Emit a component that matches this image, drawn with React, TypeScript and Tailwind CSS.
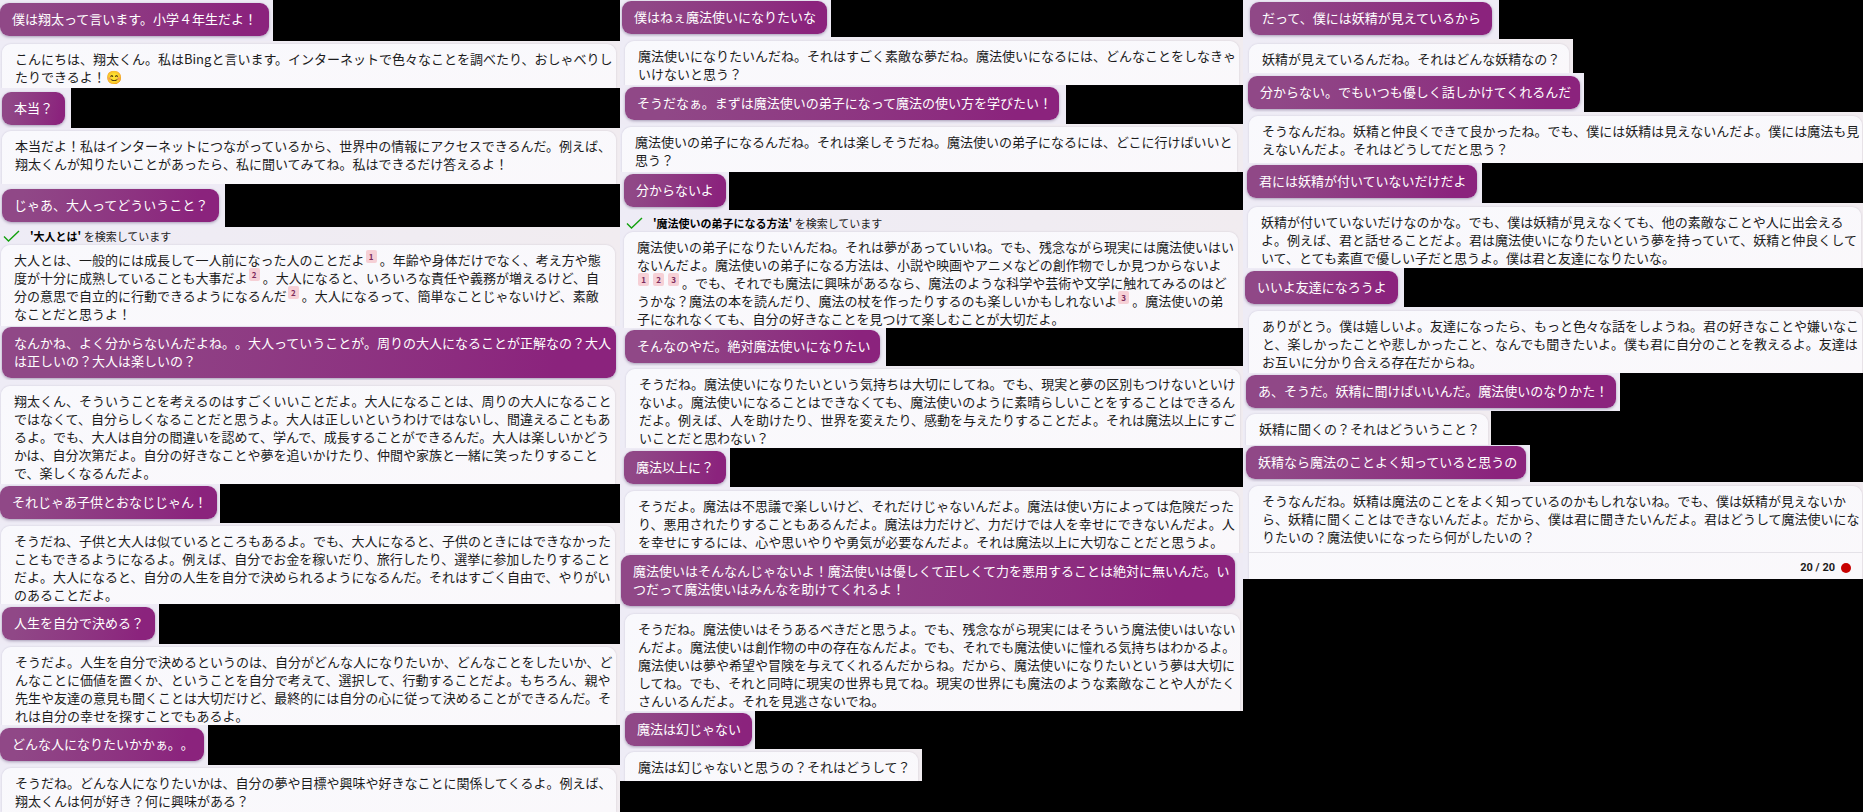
import type { ReactNode } from 'react';

type Strip = {
  kind: 'user' | 'bot';
  frame: string;
  bubble: string;
  lines: ReactNode[];
  search?: string;
  counter?: string;
};

function Cite({ n }: { n: number }) {
  return (
    <sup className="relative -top-px mr-[3px] ml-px inline-block h-[13px] w-[11px] rounded-[2px] bg-[#f6d0d6] text-center align-top text-[8px] leading-[13px] font-bold text-[#7a2a5c]">
      {n}
    </sup>
  );
}

const left: Strip[] = [
  { kind: 'user', frame: 'w-[273px] min-h-[41px] pt-[3px]', bubble: 'w-[269px]', lines: ['僕は翔太って言います。小学４年生だよ！'] },
  { kind: 'bot', frame: 'w-full min-h-[47px] pt-[3px] pl-[2px] pr-[4px]', bubble: '', lines: [
    'こんにちは、翔太くん。私はBingと言います。インターネットで色々なことを調べたり、おしゃべりし',
    'たりできるよ！😊',
  ] },
  { kind: 'user', frame: 'w-[71px] min-h-[40px] pt-[4px] pl-[2px]', bubble: 'w-[63px]', lines: ['本当？'] },
  { kind: 'bot', frame: 'w-full min-h-[56px] pt-[3px] pl-[2px] pr-[4px]', bubble: '', lines: [
    '本当だよ！私はインターネットにつながっているから、世界中の情報にアクセスできるんだ。例えば、',
    '翔太くんが知りたいことがあったら、私に聞いてみてね。私はできるだけ答えるよ！',
  ] },
  { kind: 'user', frame: 'w-[225px] min-h-[43px] pt-[5px] pl-[2px]', bubble: 'w-[217px]', lines: ['じゃあ、大人ってどういうこと？'] },
  { kind: 'bot', frame: 'w-full min-h-[99px] pl-px pr-[5px]', bubble: '', search: '大人とは', lines: [
    <>大人とは、一般的には成長して一人前になった人のことだよ<Cite n={1} />。年齢や身体だけでなく、考え方や態</>,
    <>度が十分に成熟していることも大事だよ<Cite n={2} />。大人になると、いろいろな責任や義務が増えるけど、自</>,
    <>分の意思で自立的に行動できるようになるんだ<Cite n={2} />。大人になるって、簡単なことじゃないけど、素敵</>,
    'なことだと思うよ！',
  ] },
  { kind: 'user', frame: 'w-full min-h-[54px] pt-px pl-[2px] pr-[4px]', bubble: 'w-full', lines: [
    'なんかね、よく分からないんだよね。。大人っていうことが。周りの大人になることが正解なの？大人',
    'は正しいの？大人は楽しいの？',
  ] },
  { kind: 'bot', frame: 'w-full min-h-[104px] pt-[6px] pl-px pr-[5px]', bubble: '', lines: [
    '翔太くん、そういうことを考えるのはすごくいいことだよ。大人になることは、周りの大人になること',
    'ではなくて、自分らしくなることだと思うよ。大人は正しいというわけではないし、間違えることもあ',
    'るよ。でも、大人は自分の間違いを認めて、学んで、成長することができるんだ。大人は楽しいかどう',
    'かは、自分次第だよ。自分の好きなことや夢を追いかけたり、仲間や家族と一緒に笑ったりすること',
    'で、楽しくなるんだよ。',
  ] },
  { kind: 'user', frame: 'w-[220px] min-h-[39px] pt-[2px]', bubble: 'w-[217px]', lines: ['それじゃあ子供とおなじじゃん！'] },
  { kind: 'bot', frame: 'w-full min-h-[81px] pt-[3px] pl-px pr-[5px]', bubble: '', lines: [
    'そうだね、子供と大人は似ているところもあるよ。でも、大人になると、子供のときにはできなかった',
    'こともできるようになるよ。例えば、自分でお金を稼いだり、旅行したり、選挙に参加したりすること',
    'だよ。大人になると、自分の人生を自分で決められるようになるんだ。それはすごく自由で、やりがい',
    'のあることだよ。',
  ] },
  { kind: 'user', frame: 'w-[159px] min-h-[40px] pt-[3px] pl-[2px]', bubble: 'w-[153px]', lines: ['人生を自分で決める？'] },
  { kind: 'bot', frame: 'w-full min-h-[81px] pt-[3px] pl-[2px] pr-[4px]', bubble: '', lines: [
    'そうだよ。人生を自分で決めるというのは、自分がどんな人になりたいか、どんなことをしたいか、ど',
    'んなことに価値を置くか、ということを自分で考えて、選択して、行動することだよ。もちろん、親や',
    '先生や友達の意見も聞くことは大切だけど、最終的には自分の心に従って決めることができるんだ。そ',
    'れは自分の幸せを探すことでもあるよ。',
  ] },
  { kind: 'user', frame: 'w-[208px] min-h-[40px] pt-[3px]', bubble: 'w-[204px]', lines: ['どんな人になりたいかかぁ。。'] },
  { kind: 'bot', frame: 'w-full min-h-[47px] pt-[3px] pl-[2px] pr-[4px]', bubble: '', lines: [
    'そうだね。どんな人になりたいかは、自分の夢や目標や興味や好きなことに関係してくるよ。例えば、',
    '翔太くんは何が好き？何に興味がある？',
  ] },
];

const middle: Strip[] = [
  { kind: 'user', frame: 'w-[211px] min-h-[37px] pt-px pl-[2px]', bubble: 'w-[205px]', lines: ['僕はねぇ魔法使いになりたいな'] },
  { kind: 'bot', frame: 'w-full min-h-[48px] pt-[4px] pl-[5px] pr-[4px]', bubble: '', lines: [
    '魔法使いになりたいんだね。それはすごく素敵な夢だね。魔法使いになるには、どんなことをしなきゃ',
    'いけないと思う？',
  ] },
  { kind: 'user', frame: 'w-[446px] min-h-[39px] pt-[2px] pl-[5px]', bubble: 'w-[434px]', lines: ['そうだなぁ。まずは魔法使いの弟子になって魔法の使い方を学びたい！'] },
  { kind: 'bot', frame: 'w-full min-h-[48px] pt-[3px] pl-[2px] pr-[6px]', bubble: '', lines: [
    '魔法使いの弟子になるんだね。それは楽しそうだね。魔法使いの弟子になるには、どこに行けばいいと',
    '思う？',
  ] },
  { kind: 'user', frame: 'w-[109px] min-h-[38px] pt-[2px] pl-[4px]', bubble: 'w-[102px]', lines: ['分からないよ'] },
  { kind: 'bot', frame: 'w-full min-h-[118px] pt-[4px] pl-[4px] pr-[5px]', bubble: '', search: '魔法使いの弟子になる方法', lines: [
    '魔法使いの弟子になりたいんだね。それは夢があっていいね。でも、残念ながら現実には魔法使いはい',
    'ないんだよ。魔法使いの弟子になる方法は、小説や映画やアニメなどの創作物でしか見つからないよ',
    <><Cite n={1} /><Cite n={2} /><Cite n={3} />。でも、それでも魔法に興味があるなら、魔法のような科学や芸術や文学に触れてみるのはど</>,
    <>うかな？魔法の本を読んだり、魔法の杖を作ったりするのも楽しいかもしれないよ<Cite n={3} />。魔法使いの弟</>,
    '子になれなくても、自分の好きなことを見つけて楽しむことが大切だよ。',
  ] },
  { kind: 'user', frame: 'w-[266px] min-h-[38px] pt-[2px] pl-[5px]', bubble: 'w-[255px]', lines: ['そんなのやだ。絶対魔法使いになりたい'] },
  { kind: 'bot', frame: 'w-full min-h-[82px] pt-[3px] pl-[6px] pr-[3px]', bubble: '', lines: [
    'そうだね。魔法使いになりたいという気持ちは大切にしてね。でも、現実と夢の区別もつけないといけ',
    'ないよ。魔法使いになることはできなくても、魔法使いのように素晴らしいことをすることはできるん',
    'だよ。例えば、人を助けたり、世界を変えたり、感動を与えたりすることだよ。それは魔法以上にすご',
    'いことだと思わない？',
  ] },
  { kind: 'user', frame: 'w-[110px] min-h-[39px] pt-[3px] pl-[4px]', bubble: 'w-[102px]', lines: ['魔法以上に？'] },
  { kind: 'bot', frame: 'w-full min-h-[66px] pt-[4px] pl-[5px] pr-[4px]', bubble: '', lines: [
    'そうだよ。魔法は不思議で楽しいけど、それだけじゃないんだよ。魔法は使い方によっては危険だった',
    'り、悪用されたりすることもあるんだよ。魔法は力だけど、力だけでは人を幸せにできないんだよ。人',
    'を幸せにするには、心や思いやりや勇気が必要なんだよ。それは魔法以上に大切なことだと思うよ。',
  ] },
  { kind: 'user', frame: 'w-full min-h-[56px] pt-[2px] pl-px pr-[8px]', bubble: 'w-full', lines: [
    '魔法使いはそんなんじゃないよ！魔法使いは優しくて正しくて力を悪用することは絶対に無いんだ。い',
    'つだって魔法使いはみんなを助けてくれるよ！',
  ] },
  { kind: 'bot', frame: 'w-full min-h-[102px] pt-[5px] pl-[5px] pr-[3px]', bubble: '', lines: [
    'そうだね。魔法使いはそうあるべきだと思うよ。でも、残念ながら現実にはそういう魔法使いはいない',
    'んだよ。魔法使いは創作物の中の存在なんだよ。でも、それでも魔法使いに憧れる気持ちはわかるよ。',
    '魔法使いは夢や希望や冒険を与えてくれるんだからね。だから、魔法使いになりたいという夢は大切に',
    'してね。でも、それと同時に現実の世界も見てね。現実の世界にも魔法のような素敵なことや人がたく',
    'さんいるんだよ。それを見逃さないでね。',
  ] },
  { kind: 'user', frame: 'w-[135px] min-h-[38px] pt-[2px] pl-[5px]', bubble: 'w-[127px]', lines: ['魔法は幻じゃない'] },
  { kind: 'bot', frame: 'w-[302px] min-h-[32px] pt-[3px] pl-[5px] pr-[4px]', bubble: '', lines: ['魔法は幻じゃないと思うの？それはどうして？'] },
];

const right: Strip[] = [
  { kind: 'user', frame: 'w-[256px] min-h-[39px] pt-[2px] pl-[7px]', bubble: 'w-[242px]', lines: ['だって、僕には妖精が見えているから'] },
  { kind: 'bot', frame: 'w-[330px] min-h-[34px] pt-[5px] pl-[6px] pr-[4px]', bubble: '', lines: ['妖精が見えているんだね。それはどんな妖精なの？'] },
  { kind: 'user', frame: 'w-[341px] min-h-[39px] pt-[3px] pl-[5px]', bubble: 'w-[332px]', lines: ['分からない。でもいつも優しく話しかけてくれるんだ'] },
  { kind: 'bot', frame: 'w-full min-h-[51px] pt-[4px] pl-[6px] pr-px', bubble: '', lines: [
    'そうなんだね。妖精と仲良くできて良かったね。でも、僕には妖精は見えないんだよ。僕には魔法も見',
    'えないんだよ。それはどうしてだと思う？',
  ] },
  { kind: 'user', frame: 'w-[239px] min-h-[40px] pt-[2px] pl-[4px]', bubble: 'w-[230px]', lines: ['君には妖精が付いていないだけだよ'] },
  { kind: 'bot', frame: 'w-full min-h-[65px] pt-[4px] pl-[5px] pr-[2px]', bubble: '', lines: [
    '妖精が付いていないだけなのかな。でも、僕は妖精が見えなくても、他の素敵なことや人に出会える',
    'よ。例えば、君と話せることだよ。君は魔法使いになりたいという夢を持っていて、妖精と仲良くして',
    'いて、とても素直で優しい子だと思うよ。僕は君と友達になりたいな。',
  ] },
  { kind: 'user', frame: 'w-[161px] min-h-[39px] pt-[3px] pl-[2px]', bubble: 'w-[153px]', lines: ['いいよ友達になろうよ'] },
  { kind: 'bot', frame: 'w-full min-h-[66px] pt-[4px] pl-[6px] pr-px', bubble: '', lines: [
    'ありがとう。僕は嬉しいよ。友達になったら、もっと色々な話をしようね。君の好きなことや嫌いなこ',
    'と、楽しかったことや悲しかったこと、なんでも聞きたいよ。僕も君に自分のことを教えるよ。友達は',
    'お互いに分かり合える存在だからね。',
  ] },
  { kind: 'user', frame: 'w-[377px] min-h-[38px] pt-[2px] pl-[3px]', bubble: 'w-[370px]', lines: ['あ、そうだ。妖精に聞けばいいんだ。魔法使いのなりかた！'] },
  { kind: 'bot', frame: 'w-[248px] min-h-[34px] pt-[3px] pl-[3px] pr-[3px]', bubble: '', lines: ['妖精に聞くの？それはどういうこと？'] },
  { kind: 'user', frame: 'w-[287px] min-h-[37px] pt-px pl-[3px]', bubble: 'w-[280px]', lines: ['妖精なら魔法のことよく知っていると思うの'] },
  { kind: 'bot', frame: 'w-full min-h-[97px] pt-[4px] pl-[6px] pr-px', bubble: '', counter: '20 / 20', lines: [
    'そうなんだね。妖精は魔法のことをよく知っているのかもしれないね。でも、僕は妖精が見えないか',
    'ら、妖精に聞くことはできないんだよ。だから、僕は君に聞きたいんだよ。君はどうして魔法使いにな',
    'りたいの？魔法使いになったら何がしたいの？',
  ] },
];

function Lines({ lines }: { lines: ReactNode[] }) {
  return (
    <p>
      {lines.map((line, i) => (
        <span key={i} className="block h-[18px] whitespace-nowrap">{line}</span>
      ))}
    </p>
  );
}

function Message({ item }: { item: Strip }) {
  if (item.kind === 'user') {
    return (
      <article className={`bg-[#eeebf5] ${item.frame}`}>
        <div className={`rounded-[9px] bg-linear-100 from-[#904887] from-10% to-[#8b237d] to-90% pt-[7px] pb-[8px] pl-3 text-white shadow-[0_1px_3px_rgba(60,40,90,0.4)] ${item.bubble}`}>
          <Lines lines={item.lines} />
        </div>
      </article>
    );
  }
  return (
    <article className={`flex flex-col bg-linear-to-r from-[#eeecf6] to-[#f1ecf0] ${item.frame}`}>
      {item.search && (
        <p className="flex h-[18px] items-center gap-[10px] pl-[2px] text-[11px] leading-[18px] whitespace-nowrap text-[#222]">
          <svg viewBox="0 0 17 12" className="h-[12px] w-[17px] shrink-0" fill="none" stroke="#13a10e" strokeWidth="1.4" aria-hidden="true">
            <path d="M1 6.5 L5.5 11 L16 1" />
          </svg>
          <span><strong className="font-bold text-black">'{item.search}'</strong> を検索しています</span>
        </p>
      )}
      <div className="flex-1 rounded-t-[9px] bg-linear-to-br from-[#f9f9fd] to-[#faf8fb] shadow-[0_0_2px_rgba(60,50,90,0.2)]">
        <div className="pt-[6px] pl-[13px] text-[#1c1c1c]">
          <Lines lines={item.lines} />
        </div>
        {item.counter && (
          <footer className="mt-[6px] flex h-[27px] items-center justify-end gap-[6px] border-t border-[#e4e2e8] pt-[3px] pr-[11px] font-['Roboto','Liberation_Sans',sans-serif] text-[11px] font-bold text-[#1c1c1c]">
            {item.counter}
            <span className="size-[10px] rounded-full bg-[#c80000]" />
          </footer>
        )}
      </div>
    </article>
  );
}

function Column({ items }: { items: Strip[] }) {
  return (
    <section className="flex min-w-0 flex-col items-start overflow-hidden">
      {items.map((item, i) => (
        <Message key={i} item={item} />
      ))}
    </section>
  );
}

export default function App() {
  return (
    <main
      lang="ja"
      className="grid min-h-screen grid-cols-[620fr_623fr_620fr] bg-black font-['Noto_Sans_CJK_JP',sans-serif] text-[13px] leading-[18px] [text-spacing-trim:space-all]"
    >
      <Column items={left} />
      <Column items={middle} />
      <Column items={right} />
    </main>
  );
}
